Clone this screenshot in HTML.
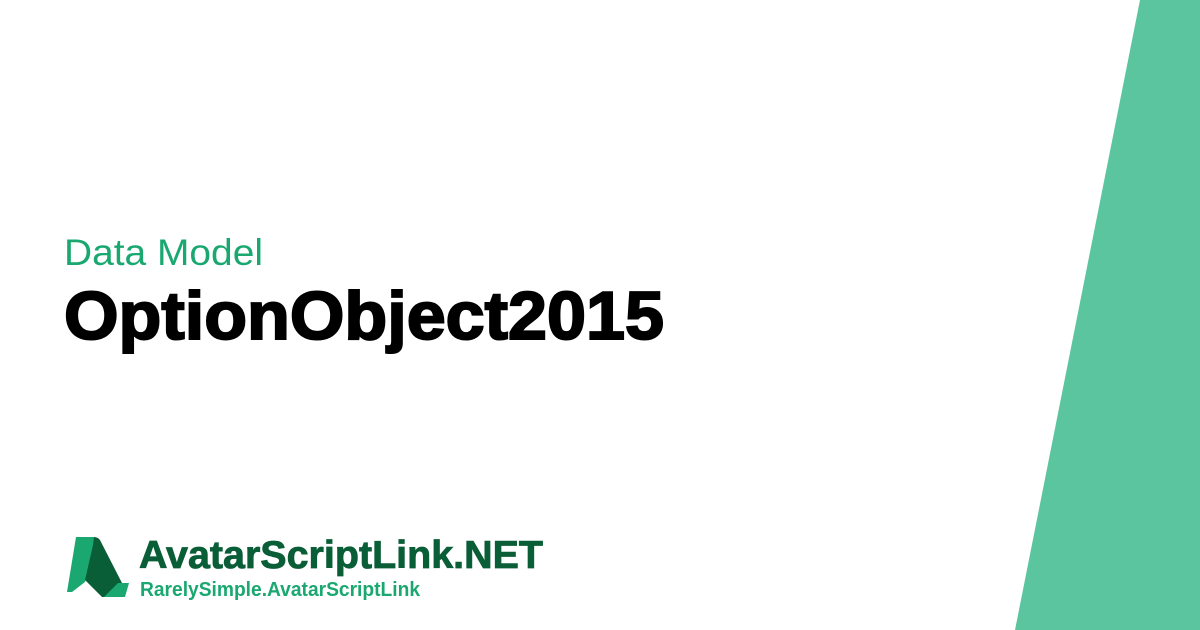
<!DOCTYPE html>
<html><head><style>
html,body{margin:0;padding:0;width:1200px;height:630px;overflow:hidden;background:#fff;font-family:"Liberation Sans",sans-serif}
</style></head><body>
<svg width="1200" height="630" style="position:absolute;left:0;top:0">
<polygon points="1140,0 1200,0 1200,630 1015,630" fill="#5bc5a0"/>
<text x="64" y="265" font-size="37" fill="#1aa870" textLength="199" lengthAdjust="spacingAndGlyphs">Data Model</text>
<text x="64" y="339" font-size="68" font-weight="bold" fill="#000" stroke="#000" stroke-width="2" textLength="600" lengthAdjust="spacingAndGlyphs">OptionObject2015</text>
<path d="M76,537 L94,537 Q97,538 96,545 L85,582 L72,592 L67,592 Z" fill="#1aa870"/>
<path d="M94,537 Q99,537 101,542 L122,583 L107,597 L102,597 L85,580 L93,545 Z" fill="#0a5e37"/>
<polygon points="118,583 129,583 125,597 104,597" fill="#1aa870"/>
<text x="139" y="568" font-size="39" font-weight="bold" fill="#0a5e37" stroke="#0a5e37" stroke-width="0.8" textLength="404" lengthAdjust="spacingAndGlyphs">AvatarScriptLink.NET</text>
<text x="140" y="596" font-size="20" font-weight="bold" fill="#1aa870" textLength="280" lengthAdjust="spacingAndGlyphs">RarelySimple.AvatarScriptLink</text>
</svg>
</body></html>
